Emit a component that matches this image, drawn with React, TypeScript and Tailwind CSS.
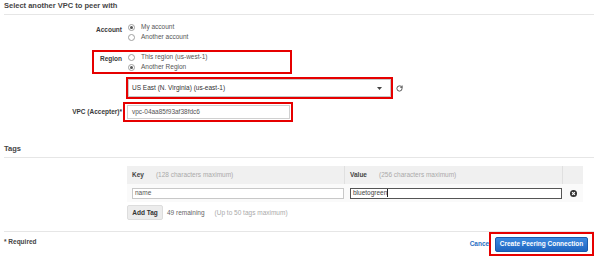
import { RotateCw } from 'lucide-react'

function Radio({ checked }: { checked?: boolean }) {
  return (
    <span className="w-[7px] h-[7px] rounded-full border border-[#a0a0a0] bg-white flex items-center justify-center shrink-0">
      {checked && <span className="w-[3px] h-[3px] rounded-full bg-[#555]" />}
    </span>
  )
}

function RadioLine({ label, checked }: { label: string; checked?: boolean }) {
  return (
    <div className="h-[10px] flex items-center gap-[6px]">
      <Radio checked={checked} />
      <span className="text-[#555]">{label}</span>
    </div>
  )
}

export default function App() {
  return (
    <div className="w-[602px] h-[263px] bg-white text-[6.5px] leading-[8px] text-[#3a3a3a] font-['Liberation_Sans',Arial,sans-serif] overflow-hidden">
      {/* vpc section */}
      <div className="mx-[4px] mr-[8px] h-[15px] pt-[2px] border-b border-[#e6e6e6]">
        <h2 className="text-[7.5px] font-bold text-[#444]">Select another VPC to peer with</h2>
      </div>

      <div className="flex mt-[7px]">
        <div className="w-[122px] text-right font-bold pt-[4px]">Account</div>
        <div className="pl-[6px]">
          <RadioLine label="My account" checked />
          <RadioLine label="Another account" />
        </div>
      </div>

      <div className="ml-[92px] mt-[8px] w-[200px] h-[24px] border-2 border-[#e60000] flex">
        <div className="w-[28px] text-right font-bold pt-[3px]">Region</div>
        <div className="pl-[6px]">
          <RadioLine label="This region (us-west-1)" />
          <RadioLine label="Another Region" checked />
        </div>
      </div>

      <div className="ml-[126px] mt-[3px] flex items-center gap-[3px]">
        <div className="w-[267px] h-[22px] border-2 border-[#e60000] bg-white">
          <div className="h-[18px] border border-[#c8c8c8] flex items-center justify-between pl-[3px] pr-[8px] text-[#333]">
            <span>US East (N. Virginia) (us-east-1)</span>
            <svg width="5" height="3" viewBox="0 0 5 3"><path d="M0 0h5L2.5 3z" fill="#444" /></svg>
          </div>
        </div>
        <RotateCw size={7} strokeWidth={3} className="text-[#444] mt-[1px]" />
      </div>

      <div className="flex items-center mt-[3px]">
        <div className="w-[122px] text-right font-bold">VPC (Accepter)*</div>
        <div className="ml-[1px] w-[170px] h-[20px] border-2 border-[#e60000] py-[1px] pl-[2px] pr-[1px]">
          <div className="h-full border border-[#d0d0d0] flex items-center pl-[4px] text-[#555]">
            vpc-04aa85f93af38fdc6
          </div>
        </div>
      </div>

      {/* tags section */}
      <div className="mx-[4px] mr-[8px] mt-[23px] h-[13px] border-b border-[#e6e6e6]">
        <h2 className="text-[7.5px] font-bold text-[#444]">Tags</h2>
      </div>

      <div className="ml-[127px] mt-[8px] w-[456px]">
        <div className="h-[18px] bg-[#f0f0f0] flex items-center">
          <div className="w-[218px] h-full flex items-center gap-[12px] pl-[5px] border-r border-[#e0e0e0]">
            <span className="font-bold text-[#444]">Key</span>
            <span className="text-[#aaa]">(128 characters maximum)</span>
          </div>
          <div className="w-[218px] h-full flex items-center gap-[12px] pl-[5px] border-r border-[#e0e0e0]">
            <span className="font-bold text-[#444]">Value</span>
            <span className="text-[#aaa]">(256 characters maximum)</span>
          </div>
        </div>
        <div className="h-[18px] bg-[#fafafa] flex items-center">
          <div className="w-[218px] pl-[5px] pr-[1px]">
            <div className="h-[11px] border border-[#c8c8c8] bg-white flex items-center pl-[2px] text-[#555]">name</div>
          </div>
          <div className="w-[218px] pl-[5px] pr-[1px]">
            <div className="h-[11px] border border-[#555] bg-white flex items-center pl-[2px] text-[#444]">
              bluetogreen<span className="w-px h-[8px] bg-[#222]" />
            </div>
          </div>
          <div className="w-[20px] flex justify-center">
            <svg width="7" height="7" viewBox="0 0 10 10">
              <circle cx="5" cy="5" r="5" fill="#333" />
              <path d="M3 3l4 4M7 3l-4 4" stroke="#fff" strokeWidth="1.6" />
            </svg>
          </div>
        </div>
        <div className="mt-[3px] flex items-center">
          <button className="w-[36px] h-[15px] rounded-[2px] border border-[#ddd] bg-[#ececec] font-bold text-[#333]">
            Add Tag
          </button>
          <span className="ml-[4px] text-[#666]">49 remaining</span>
          <span className="ml-[10px] text-[#aaa]">(Up to 50 tags maximum)</span>
        </div>
      </div>

      {/* footer */}
      <div className="mx-[4px] mr-[8px] mt-[11px] border-t border-[#e6e6e6] flex justify-between">
        <span className="font-bold text-[#444] mt-[6px]">* Required</span>
        <div className="flex items-center">
          <span className="text-[#2a6fc4] font-bold">Cancel</span>
          <div className="-ml-[2px] w-[105px] h-[24px] border-2 border-[#e60000] bg-white flex items-center justify-center">
            <button className="w-[93px] h-[15px] rounded-[2px] bg-gradient-to-b from-[#3c8ae0] to-[#1f66c1] border border-[#1a5aae] text-white font-bold">
              Create Peering Connection
            </button>
          </div>
        </div>
      </div>
    </div>
  )
}
